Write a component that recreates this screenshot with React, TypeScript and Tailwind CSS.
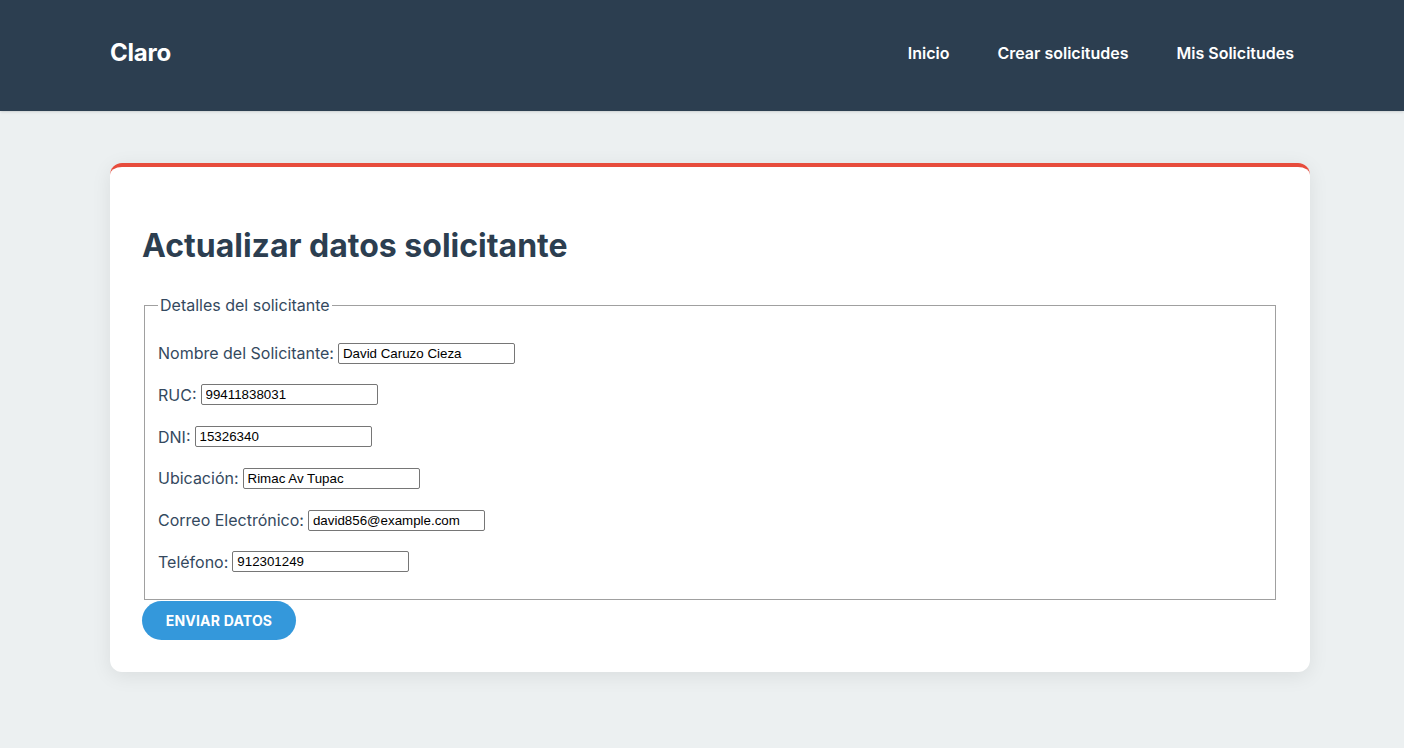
import { useState } from 'react';

const fields = [
  { id: 'nombre', label: 'Nombre del Solicitante:', value: 'David Caruzo Cieza' },
  { id: 'ruc', label: 'RUC:', value: '99411838031' },
  { id: 'dni', label: 'DNI:', value: '15326340' },
  { id: 'ubicacion', label: 'Ubicación:', value: 'Rimac Av Tupac' },
  { id: 'correo', label: 'Correo Electrónico:', value: 'david856@example.com' },
  { id: 'telefono', label: 'Teléfono:', value: '912301249' },
];

export default function App() {
  const [values, setValues] = useState<Record<string, string>>(
    Object.fromEntries(fields.map((f) => [f.id, f.value]))
  );

  return (
    <div className="min-h-screen bg-[#ecf0f1] font-['Inter','Noto_Sans',sans-serif]">
      {/* Header */}
      <header className="h-[111px] bg-[#2c3e50] px-[110px] pb-[6px] flex items-center justify-between shadow-sm">
        <span className="text-white text-[24px] font-bold tracking-[-0.2px]">Claro</span>
        <nav className="flex items-center gap-[48px]">
          <a href="#" className="text-white text-[16px] font-semibold">Inicio</a>
          <a href="#" className="text-white text-[16px] font-semibold">Crear solicitudes</a>
          <a href="#" className="text-white text-[16px] font-semibold">Mis Solicitudes</a>
        </nav>
      </header>

      {/* Card */}
      <main className="pl-[110px] pt-[52px] pb-[76px]">
        <div className="w-[1200px] bg-white rounded-[12px] border-t-4 border-[#e74c3c] shadow-[0_4px_20px_rgba(0,0,0,0.08)] px-[32px] pt-[28px] pb-[32px]">
          <h1 className="text-[32px] leading-[38px] font-bold text-[#2c3e50] mt-[32px] mb-[28px]">Actualizar datos solicitante</h1>

          <fieldset className="mx-[2px] border border-[#a0a0a0] px-[13px] pb-[26px]">
            <legend className="px-[2px] text-[16px] leading-[24px] text-[#34495e]">Detalles del solicitante</legend>
            <div className="flex flex-col gap-[19.8px] pt-[25px]">
              {fields.map((f) => (
                <div key={f.id} className="flex items-center h-[22px] gap-[4px]">
                  <label htmlFor={f.id} className="text-[16px] leading-[22px] text-[#34495e]">{f.label}</label>
                  <input
                    id={f.id}
                    type="text"
                    value={values[f.id]}
                    onChange={(e) => setValues({ ...values, [f.id]: e.target.value })}
                    className="w-[177px] h-[21px] border border-[#767676] rounded-[2px] px-[4px] text-[13.33px] text-black font-['Liberation_Sans',Arial,sans-serif] outline-none"
                  />
                </div>
              ))}
            </div>
          </fieldset>

          <button className="mt-[1px] h-[39px] w-[154px] rounded-full bg-[#3498db] text-white text-[14px] font-bold uppercase tracking-[0.2px]">
            Enviar datos
          </button>
        </div>
      </main>
    </div>
  );
}
